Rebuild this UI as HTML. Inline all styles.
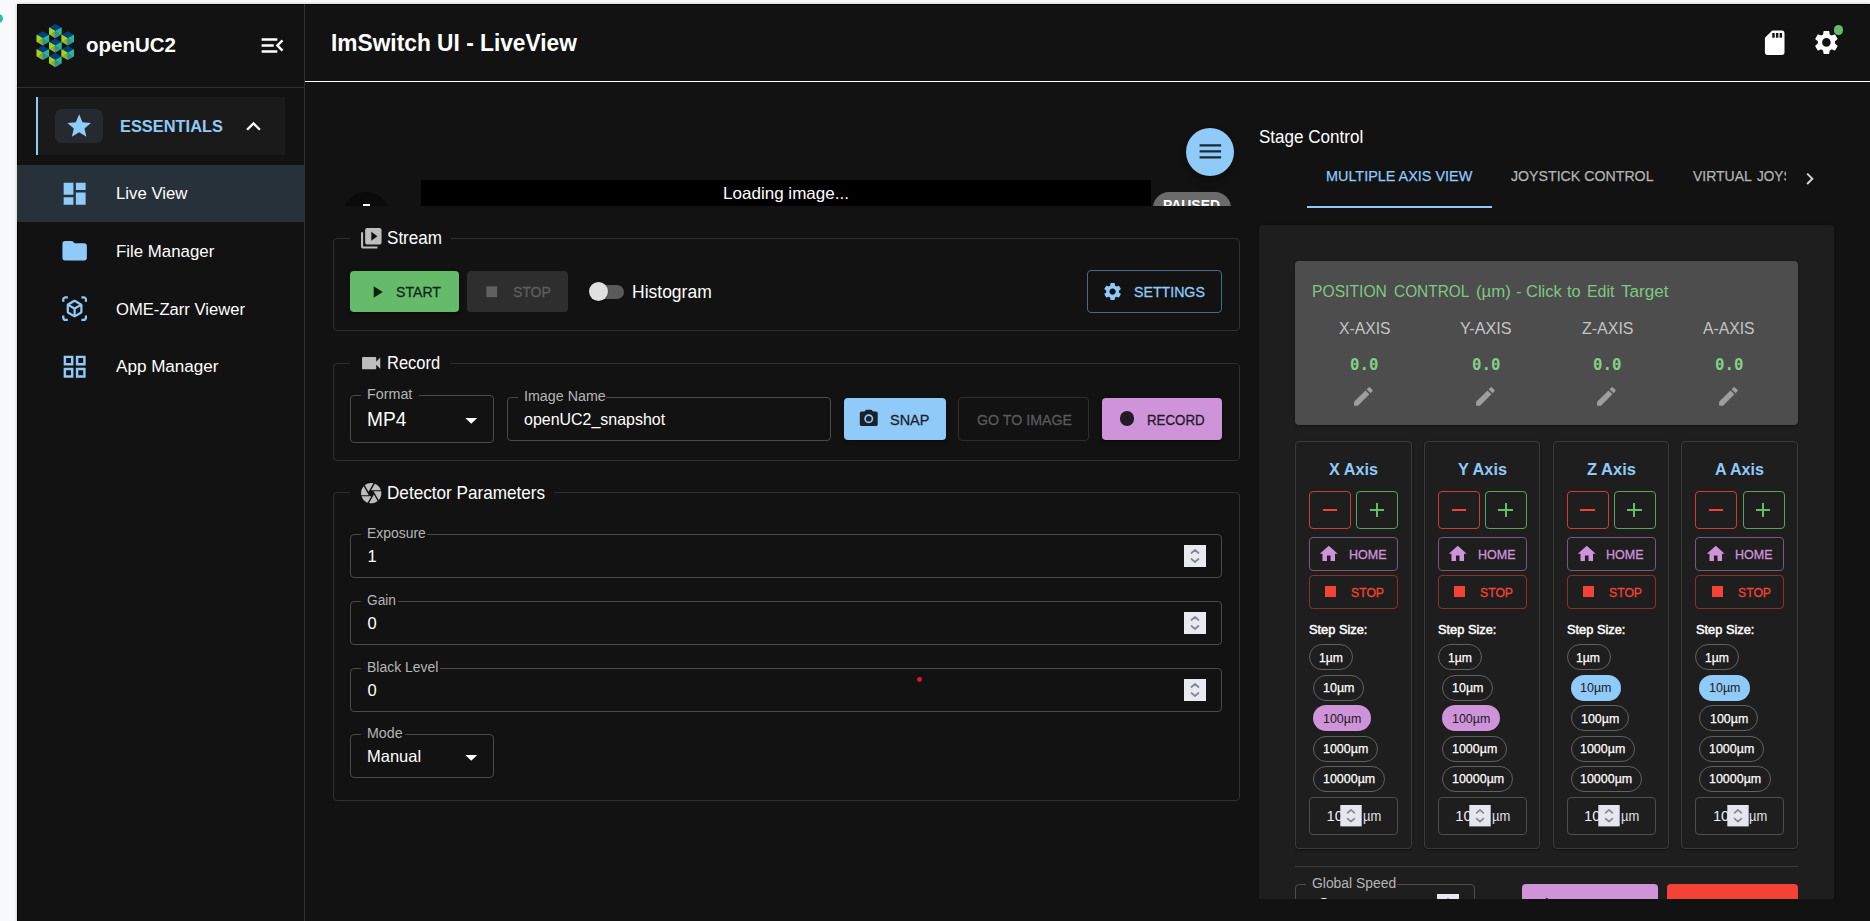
<!DOCTYPE html>
<html lang="en">
<head>
<meta charset="utf-8">
<title>ImSwitch UI - LiveView</title>
<style>
html,body{margin:0;padding:0}
body{width:1870px;height:921px;overflow:hidden;position:relative;background:#f8f9fa;font-family:"Liberation Sans",sans-serif;}
div,svg.ic,.t{position:absolute;box-sizing:border-box}
.t{white-space:nowrap;transform-origin:0 0;line-height:1;margin:0;padding:0;font-weight:400}
.g{position:absolute;left:0;top:0;width:0;height:0;display:block}
.clip{overflow:hidden}

</style>
</head>
<body>
<div style="left:-5.8px;top:13.5px;width:9.1px;height:9.1px;border-radius:50%;background:#2bc1a0"></div>
<div style="left:17px;top:4px;width:1853px;height:917px;background:#121212;border-top:1px solid #000;border-left:1px solid #000;box-shadow:0 0 3px rgba(0,0,0,.25)"></div>
<aside class="g">
<div style="left:304px;top:4px;width:1px;height:917px;background:#2f2f2f"></div>
<div style="left:17px;top:87px;width:287px;height:1px;background:#2f2f2f"></div>
<svg class="ic" style="left:34px;top:20px;width:44px;height:50px" viewBox="34 20 44 50"><polygon points="55.30,23.90 61.49,27.48 55.30,31.05 49.11,27.48" fill="#01407f"/><polygon points="49.11,27.48 55.30,31.05 55.30,38.20 49.11,34.62" fill="#8fb82a"/><polygon points="49.11,27.48 55.30,31.05 49.11,34.62" fill="#a6d80e"/><polygon points="55.30,31.05 55.30,38.20 52.20,32.84" fill="#80a04a"/><polygon points="61.49,27.48 61.49,34.62 55.30,38.20 55.30,31.05" fill="#2a9d92"/><polygon points="61.49,27.48 61.49,34.62 55.30,31.05" fill="#27b896"/><polygon points="55.30,31.05 55.30,38.20 58.40,32.84" fill="#3a8a8c"/><polygon points="55.30,38.40 61.49,41.97 55.30,45.55 49.11,41.97" fill="#01407f"/><polygon points="49.11,41.97 55.30,45.55 55.30,52.70 49.11,49.12" fill="#8fb82a"/><polygon points="49.11,41.97 55.30,45.55 49.11,49.12" fill="#a6d80e"/><polygon points="55.30,45.55 55.30,52.70 52.20,47.34" fill="#80a04a"/><polygon points="61.49,41.97 61.49,49.12 55.30,52.70 55.30,45.55" fill="#2a9d92"/><polygon points="61.49,41.97 61.49,49.12 55.30,45.55" fill="#27b896"/><polygon points="55.30,45.55 55.30,52.70 58.40,47.34" fill="#3a8a8c"/><polygon points="55.30,52.85 61.49,56.42 55.30,60.00 49.11,56.42" fill="#01407f"/><polygon points="49.11,56.42 55.30,60.00 55.30,67.15 49.11,63.58" fill="#8fb82a"/><polygon points="49.11,56.42 55.30,60.00 49.11,63.58" fill="#a6d80e"/><polygon points="55.30,60.00 55.30,67.15 52.20,61.79" fill="#80a04a"/><polygon points="61.49,56.42 61.49,63.58 55.30,67.15 55.30,60.00" fill="#2a9d92"/><polygon points="61.49,56.42 61.49,63.58 55.30,60.00" fill="#27b896"/><polygon points="55.30,60.00 55.30,67.15 58.40,61.79" fill="#3a8a8c"/><polygon points="42.85,31.15 49.04,34.72 42.85,38.30 36.66,34.72" fill="#01407f"/><polygon points="36.66,34.72 42.85,38.30 42.85,45.45 36.66,41.88" fill="#8fb82a"/><polygon points="36.66,34.72 42.85,38.30 36.66,41.88" fill="#a6d80e"/><polygon points="42.85,38.30 42.85,45.45 39.75,40.09" fill="#80a04a"/><polygon points="49.04,34.72 49.04,41.88 42.85,45.45 42.85,38.30" fill="#2a9d92"/><polygon points="49.04,34.72 49.04,41.88 42.85,38.30" fill="#27b896"/><polygon points="42.85,38.30 42.85,45.45 45.95,40.09" fill="#3a8a8c"/><polygon points="42.85,45.65 49.04,49.22 42.85,52.80 36.66,49.22" fill="#01407f"/><polygon points="36.66,49.22 42.85,52.80 42.85,59.95 36.66,56.38" fill="#8fb82a"/><polygon points="36.66,49.22 42.85,52.80 36.66,56.38" fill="#a6d80e"/><polygon points="42.85,52.80 42.85,59.95 39.75,54.59" fill="#80a04a"/><polygon points="49.04,49.22 49.04,56.38 42.85,59.95 42.85,52.80" fill="#2a9d92"/><polygon points="49.04,49.22 49.04,56.38 42.85,52.80" fill="#27b896"/><polygon points="42.85,52.80 42.85,59.95 45.95,54.59" fill="#3a8a8c"/><polygon points="67.75,31.15 73.94,34.72 67.75,38.30 61.56,34.72" fill="#01407f"/><polygon points="61.56,34.72 67.75,38.30 67.75,45.45 61.56,41.88" fill="#8fb82a"/><polygon points="61.56,34.72 67.75,38.30 61.56,41.88" fill="#a6d80e"/><polygon points="67.75,38.30 67.75,45.45 64.65,40.09" fill="#80a04a"/><polygon points="73.94,34.72 73.94,41.88 67.75,45.45 67.75,38.30" fill="#2a9d92"/><polygon points="73.94,34.72 73.94,41.88 67.75,38.30" fill="#27b896"/><polygon points="67.75,38.30 67.75,45.45 70.85,40.09" fill="#3a8a8c"/><polygon points="67.75,45.65 73.94,49.22 67.75,52.80 61.56,49.22" fill="#01407f"/><polygon points="61.56,49.22 67.75,52.80 67.75,59.95 61.56,56.38" fill="#8fb82a"/><polygon points="61.56,49.22 67.75,52.80 61.56,56.38" fill="#a6d80e"/><polygon points="67.75,52.80 67.75,59.95 64.65,54.59" fill="#80a04a"/><polygon points="73.94,49.22 73.94,56.38 67.75,59.95 67.75,52.80" fill="#2a9d92"/><polygon points="73.94,49.22 73.94,56.38 67.75,52.80" fill="#27b896"/><polygon points="67.75,52.80 67.75,59.95 70.85,54.59" fill="#3a8a8c"/></svg>
<span class="t" style="left:86.00px;top:36.00px;font-size:19.8px;color:#fff;font-weight:700;transform:scaleX(1.0357);">openUC2</span>
<svg class="ic" style="left:257.70px;top:30.50px;width:29px;height:29px" viewBox="0 0 24 24" fill="#fff"><path d="M3 18h13v-2H3zm0-5h10v-2H3zm0-7v2h13V6zm18 9.59L17.42 12 21 8.41 19.59 7l-5 5 5 5z"/></svg>
<div style="left:36px;top:97px;width:249px;height:58px;background:#1a1a1a;border-left:2px solid #90caf9"></div>
<div style="left:55px;top:109px;width:48px;height:34px;background:#242a2f;border-radius:7px"></div>
<svg class="ic" style="left:65.15px;top:112.45px;width:28.3px;height:28.3px" viewBox="0 0 24 24" fill="#90caf9"><path d="M12 17.27 18.18 21l-1.64-7.03L22 9.24l-7.19-.61L12 2 9.19 8.63 2 9.24l5.46 4.73L5.82 21z"/></svg>
<span class="t" style="left:119.50px;top:118.00px;font-size:17.4px;color:#90caf9;font-weight:700;transform:scaleX(0.9428);">ESSENTIALS</span>
<svg class="ic" style="left:239.00px;top:112.10px;width:29px;height:29px" viewBox="0 0 24 24" fill="#fff"><path d="m12 8-6 6 1.41 1.41L12 10.83l4.59 4.58L18 14z"/></svg>
<div style="left:17px;top:165px;width:287px;height:57px;background:#27313a"></div>
<svg class="ic" style="left:59.75px;top:178.55px;width:29.3px;height:29.3px" viewBox="0 0 24 24" fill="#90caf9"><path d="M3 13h8V3H3zm0 8h8v-6H3zm10 0h8V11h-8zm0-18v6h8V3z"/></svg>
<span class="t" style="left:115.50px;top:185.00px;font-size:17.2px;color:#fff;transform:scaleX(0.9744);">Live View</span>
<svg class="ic" style="left:59.85px;top:236.45px;width:29.3px;height:29.3px" viewBox="0 0 24 24" fill="#90caf9"><path d="M10 4H4c-1.1 0-1.99.9-1.99 2L2 18c0 1.1.9 2 2 2h16c1.1 0 2-.9 2-2V8c0-1.1-.9-2-2-2h-8z"/></svg>
<span class="t" style="left:115.50px;top:243.00px;font-size:17.2px;color:#fff;transform:scaleX(0.9796);">File Manager</span>
<svg class="ic" style="left:60.90px;top:295.00px;width:27.2px;height:27.2px" viewBox="0 0 24 24" fill="#90caf9"><path d="M3 4c0-.55.45-1 1-1h2V1H4C2.34 1 1 2.34 1 4v2h2V4zm0 16v-2H1v2c0 1.66 1.34 3 3 3h2v-2H4c-.55 0-1-.45-1-1zM20 1h-2v2h2c.55 0 1 .45 1 1v2h2V4c0-1.66-1.34-3-3-3zm1 19c0 .55-.45 1-1 1h-2v2h2c1.66 0 3-1.34 3-3v-2h-2v2zm-2-5.13V9.13c0-.72-.38-1.38-1-1.73l-5-2.88c-.31-.18-.65-.27-1-.27s-.69.09-1 .27L6 7.39c-.62.36-1 1.02-1 1.74v5.74c0 .72.38 1.38 1 1.73l5 2.88c.31.18.65.27 1 .27s.69-.09 1-.27l5-2.88c.62-.35 1-1.01 1-1.73zm-8 2.3l-4-2.3v-4.63l4 2.33v4.6zm1-6.33L8.04 8.53 12 6.25l3.96 2.28L12 10.84zm5 4.03l-4 2.3v-4.6l4-2.33v4.63z"/></svg>
<span class="t" style="left:116.00px;top:301.00px;font-size:17.2px;color:#fff;transform:scaleX(0.9667);">OME-Zarr Viewer</span>
<svg class="ic" style="left:59.55px;top:351.55px;width:29.3px;height:29.3px" viewBox="0 0 24 24" fill="#90caf9"><path d="M3 3v8h8V3zm6 6H5V5h4zm-6 4v8h8v-8zm6 6H5v-4h4zm4-16v8h8V3zm6 6h-4V5h4zm-6 4v8h8v-8zm6 6h-4v-4h4z"/></svg>
<span class="t" style="left:115.60px;top:358.00px;font-size:17.2px;color:#fff;transform:scaleX(0.9938);">App Manager</span>
</aside>
<header class="g">
<div style="left:305px;top:81px;width:1565px;height:1px;background:#fff"></div>
<span class="t" style="left:330.70px;top:31.00px;font-size:24.5px;color:#fff;font-weight:700;transform:scaleX(0.9277);">ImSwitch UI - LiveView</span>
<svg class="ic" style="left:1759.80px;top:27.70px;width:29.4px;height:29.4px" viewBox="0 0 24 24" fill="#fff"><path d="M18 2h-8L4.02 8 4 20c0 1.1.9 2 2 2h12c1.1 0 2-.9 2-2V4c0-1.1-.9-2-2-2m-6 6h-2V4h2zm3 0h-2V4h2zm3 0h-2V4h2z"/></svg>
<svg class="ic" style="left:1811.90px;top:28.10px;width:28.8px;height:28.8px" viewBox="0 0 24 24" fill="#fff"><path d="M19.14 12.94c.04-.3.06-.61.06-.94 0-.32-.02-.64-.07-.94l2.03-1.58c.18-.14.23-.41.12-.61l-1.92-3.32c-.12-.22-.37-.29-.59-.22l-2.39.96c-.5-.38-1.03-.7-1.62-.94l-.36-2.54c-.04-.24-.24-.41-.48-.41h-3.84c-.24 0-.43.17-.47.41l-.36 2.54c-.59.24-1.13.57-1.62.94l-2.39-.96c-.22-.08-.47 0-.59.22L2.74 8.87c-.12.21-.08.47.12.61l2.03 1.58c-.05.3-.09.63-.09.94s.02.64.07.94l-2.03 1.58c-.18.14-.23.41-.12.61l1.92 3.32c.12.22.37.29.59.22l2.39-.96c.5.38 1.03.7 1.62.94l.36 2.54c.05.24.24.41.48.41h3.84c.24 0 .44-.17.47-.41l.36-2.54c.59-.24 1.13-.56 1.62-.94l2.39.96c.22.08.47 0 .59-.22l1.92-3.32c.12-.22.07-.47-.12-.61zM12 15.6c-1.98 0-3.6-1.62-3.6-3.6s1.62-3.6 3.6-3.6 3.6 1.62 3.6 3.6-1.62 3.6-3.6 3.6"/></svg>
<div style="left:1833.9px;top:25.2px;width:9.4px;height:9.4px;border-radius:50%;background:#66bb6a"></div>
</header>
<main class="g">
<section class="g">
<div class="clip" style="left:0;top:0;width:1870px;height:206px">
<div style="left:421px;top:180px;width:730px;height:40px;background:#000"></div>
<span class="t" style="left:722.60px;top:185.00px;font-size:16.5px;color:#fff;transform:scaleX(1.0326);">Loading image...</span>
<div style="left:342px;top:191.7px;width:48px;height:48px;border-radius:50%;background:#0a0a0a"></div>
<div style="left:362.7px;top:203.9px;width:7.3px;height:2.2px;background:#fff"></div>
<div style="left:1152.8px;top:191.7px;width:78.4px;height:32px;border-radius:16px;background:#6b6b6b"></div>
<span class="t" style="left:1163.10px;top:198.00px;font-size:14.5px;color:#fff;font-weight:700;transform:scaleX(0.9599);">PAUSED</span>
</div>
<div style="left:1185.8px;top:127.8px;width:48.4px;height:48.4px;border-radius:50%;background:#90caf9;box-shadow:0 3px 5px -1px rgba(0,0,0,.2),0 6px 10px rgba(0,0,0,.14)"></div>
<svg class="ic" style="left:1196.05px;top:137.15px;width:28.7px;height:28.7px" viewBox="0 0 24 24" fill="#1b2833"><path d="M3 18h18v-2H3zm0-5h18v-2H3zm0-7v2h18V6z"/></svg>
<div style="left:333px;top:238px;width:907px;height:93px;border:1px solid #2f2f2f;border-radius:4px"></div>
<div style="left:350px;top:238px;width:101px;height:1px;background:#121212"></div>
<svg class="ic" style="left:358.70px;top:225.70px;width:24.6px;height:24.6px" viewBox="0 0 24 24" fill="#bdbdbd"><path d="M4 6H2v14c0 1.1.9 2 2 2h14v-2H4zm16-4H8c-1.1 0-2 .9-2 2v12c0 1.1.9 2 2 2h12c1.1 0 2-.9 2-2V4c0-1.1-.9-2-2-2m-8 12.5v-9l6 4.5z"/></svg>
<span class="t" style="left:387.30px;top:230.00px;font-size:17.9px;color:#fff;transform:scaleX(0.9535);">Stream</span>
<div style="left:350px;top:271px;width:109px;height:41px;background:#66bb6a;border-radius:4px;box-shadow:0 3px 1px -2px rgba(0,0,0,.2),0 2px 2px rgba(0,0,0,.14),0 1px 5px rgba(0,0,0,.12)"></div>
<svg class="ic" style="left:367.20px;top:281.80px;width:20px;height:20px" viewBox="0 0 24 24" fill="#10200f"><path d="M8 5v14l11-7z"/></svg>
<span class="t" style="left:396.30px;top:284.00px;font-size:15.5px;color:#14241a;transform:scaleX(0.9107);-webkit-text-stroke:0.3px #14241a;">START</span>
<div style="left:467px;top:271px;width:101px;height:41px;background:#2e2e2e;border-radius:4px"></div>
<svg class="ic" style="left:480.75px;top:280.95px;width:21.5px;height:21.5px" viewBox="0 0 24 24" fill="#616161"><path d="M6 6h12v12H6z"/></svg>
<span class="t" style="left:512.50px;top:284.00px;font-size:15.5px;color:#5f5f5f;transform:scaleX(0.9025);-webkit-text-stroke:0.3px #5f5f5f;">STOP</span>
<div style="left:590px;top:284.5px;width:34px;height:14px;border-radius:7px;background:#5a5a5a"></div>
<div style="left:588.8px;top:281.8px;width:19.4px;height:19.4px;border-radius:50%;background:#e0e0e0;box-shadow:0 2px 1px -1px rgba(0,0,0,.2),0 1px 1px rgba(0,0,0,.14),0 1px 3px rgba(0,0,0,.12)"></div>
<span class="t" style="left:632.20px;top:283.00px;font-size:18.2px;color:#fff;transform:scaleX(0.9618);">Histogram</span>
<div style="left:1087px;top:270px;width:135px;height:43px;border:1px solid #4b6a82;border-radius:4px"></div>
<svg class="ic" style="left:1102.00px;top:281.20px;width:21.2px;height:21.2px" viewBox="0 0 24 24" fill="#90caf9"><path d="M19.14 12.94c.04-.3.06-.61.06-.94 0-.32-.02-.64-.07-.94l2.03-1.58c.18-.14.23-.41.12-.61l-1.92-3.32c-.12-.22-.37-.29-.59-.22l-2.39.96c-.5-.38-1.03-.7-1.62-.94l-.36-2.54c-.04-.24-.24-.41-.48-.41h-3.84c-.24 0-.43.17-.47.41l-.36 2.54c-.59.24-1.13.57-1.62.94l-2.39-.96c-.22-.08-.47 0-.59.22L2.74 8.87c-.12.21-.08.47.12.61l2.03 1.58c-.05.3-.09.63-.09.94s.02.64.07.94l-2.03 1.58c-.18.14-.23.41-.12.61l1.92 3.32c.12.22.37.29.59.22l2.39-.96c.5.38 1.03.7 1.62.94l.36 2.54c.05.24.24.41.48.41h3.84c.24 0 .44-.17.47-.41l.36-2.54c.59-.24 1.13-.56 1.62-.94l2.39.96c.22.08.47 0 .59-.22l1.92-3.32c.12-.22.07-.47-.12-.61zM12 15.6c-1.98 0-3.6-1.62-3.6-3.6s1.62-3.6 3.6-3.6 3.6 1.62 3.6 3.6-1.62 3.6-3.6 3.6"/></svg>
<span class="t" style="left:1133.60px;top:284.00px;font-size:15.5px;color:#90caf9;transform:scaleX(0.9139);-webkit-text-stroke:0.3px #90caf9;">SETTINGS</span>
<div style="left:333px;top:363px;width:907px;height:98px;border:1px solid #2f2f2f;border-radius:4px"></div>
<div style="left:350px;top:363px;width:100px;height:1px;background:#121212"></div>
<svg class="ic" style="left:358.75px;top:350.75px;width:24.3px;height:24.3px" viewBox="0 0 24 24" fill="#bdbdbd"><path d="M17 10.5V7c0-.55-.45-1-1-1H4c-.55 0-1 .45-1 1v10c0 .55.45 1 1 1h12c.55 0 1-.45 1-1v-3.5l4 4v-11z"/></svg>
<span class="t" style="left:386.50px;top:355.00px;font-size:17.9px;color:#fff;transform:scaleX(0.9195);">Record</span>
<div style="left:350px;top:395px;width:144px;height:48px;border:1px solid #4a4a4a;border-radius:4px"></div>
<div style="left:361px;top:395px;width:58px;height:1px;background:#121212"></div>
<span class="t" style="left:366.90px;top:387.00px;font-size:14.7px;color:#b5b5b5;transform:scaleX(0.9749);">Format</span>
<span class="t" style="left:367.00px;top:410.00px;font-size:19.8px;color:#fff;transform:scaleX(0.9656);">MP4</span>
<svg class="ic" style="left:456.95px;top:405.75px;width:28.5px;height:28.5px" viewBox="0 0 24 24" fill="#fff"><path d="m7 10 5 5 5-5z"/></svg>
<div style="left:507px;top:397px;width:324px;height:44px;border:1px solid #4a4a4a;border-radius:4px"></div>
<div style="left:518px;top:397px;width:88px;height:1px;background:#121212"></div>
<span class="t" style="left:523.70px;top:389.00px;font-size:14.7px;color:#b5b5b5;transform:scaleX(0.9718);">Image Name</span>
<span class="t" style="left:524.20px;top:411.00px;font-size:16.5px;color:#fff;transform:scaleX(0.9680);">openUC2_snapshot</span>
<div style="left:844px;top:398px;width:102px;height:42px;background:#90caf9;border-radius:4px;box-shadow:0 3px 1px -2px rgba(0,0,0,.2),0 2px 2px rgba(0,0,0,.14),0 1px 5px rgba(0,0,0,.12)"></div>
<svg class="ic" style="left:858.05px;top:407.85px;width:21.5px;height:21.5px" viewBox="0 0 24 24" fill="#17222c"><circle cx="12" cy="12" r="3.2"/><path d="M9 2 7.17 4H4c-1.1 0-2 .9-2 2v12c0 1.1.9 2 2 2h16c1.1 0 2-.9 2-2V6c0-1.1-.9-2-2-2h-3.17L15 2zm3 15c-2.76 0-5-2.24-5-5s2.24-5 5-5 5 2.24 5 5-2.24 5-5 5z"/></svg>
<span class="t" style="left:889.50px;top:412.00px;font-size:15.5px;color:#17222c;transform:scaleX(0.9319);-webkit-text-stroke:0.3px #17222c;">SNAP</span>
<div style="left:958px;top:397px;width:131px;height:44px;border:1px solid #2e2e2e;border-radius:4px"></div>
<span class="t" style="left:976.50px;top:412.00px;font-size:15.5px;color:#5a5a5a;transform:scaleX(0.9170);-webkit-text-stroke:0.3px #5a5a5a;">GO TO IMAGE</span>
<div style="left:1102px;top:398px;width:120px;height:42px;background:#ce93d8;border-radius:4px;box-shadow:0 3px 1px -2px rgba(0,0,0,.2),0 2px 2px rgba(0,0,0,.14),0 1px 5px rgba(0,0,0,.12)"></div>
<div style="left:1119.6px;top:411.2px;width:14.8px;height:14.8px;border-radius:50%;background:#231927"></div>
<span class="t" style="left:1146.90px;top:412.00px;font-size:15.5px;color:#231927;transform:scaleX(0.8574);-webkit-text-stroke:0.3px #231927;">RECORD</span>
<div style="left:333px;top:492px;width:907px;height:309px;border:1px solid #2f2f2f;border-radius:4px"></div>
<div style="left:350px;top:492px;width:204px;height:1px;background:#121212"></div>
<svg class="ic" style="left:358.70px;top:480.70px;width:24.4px;height:24.4px" viewBox="0 0 24 24" fill="#bdbdbd"><path d="M9.4 10.5l4.77-8.26C13.47 2.09 12.75 2 12 2c-2.4 0-4.6.85-6.32 2.25l3.66 6.35.06-.1zM21.54 9c-.92-2.92-3.15-5.26-6-6.34L11.88 9h9.66zm.26 1h-7.49l.29.5 4.76 8.25C21 16.97 22 14.61 22 12c0-.69-.07-1.35-.2-2zM8.54 12l-3.9-6.75C3.01 7.03 2 9.39 2 12c0 .69.07 1.35.2 2h7.49l-1.15-2zm-6.08 3c.92 2.92 3.15 5.26 6 6.34L12.12 15H2.46zm11.27 0l-3.9 6.76c.7.15 1.42.24 2.17.24 2.4 0 4.6-.85 6.32-2.25l-3.66-6.35-.93 1.6z"/></svg>
<span class="t" style="left:386.80px;top:485.00px;font-size:17.9px;color:#fff;transform:scaleX(0.9577);">Detector Parameters</span>
<div style="left:350px;top:534px;width:872px;height:44px;border:1px solid #4a4a4a;border-radius:4px"></div>
<div style="left:361px;top:534px;width:66px;height:1px;background:#121212"></div>
<span class="t" style="left:366.70px;top:526.00px;font-size:14.7px;color:#b5b5b5;transform:scaleX(0.9481);">Exposure</span>
<span class="t" style="left:367.50px;top:548.00px;font-size:16.5px;color:#fff;">1</span>
<svg class="ic" style="left:1184px;top:545px;width:22px;height:22px" viewBox="0 0 22 22"><rect width="22" height="22" fill="#e9e9f0"/><path d="M7.5 8 11 5l3.5 3M7.5 14l3.5 3 3.5-3" fill="none" stroke="#85859a" stroke-width="1.7" stroke-linecap="round" stroke-linejoin="round"/></svg>
<div style="left:350px;top:601px;width:872px;height:44px;border:1px solid #4a4a4a;border-radius:4px"></div>
<div style="left:361px;top:601px;width:37px;height:1px;background:#121212"></div>
<span class="t" style="left:367.20px;top:593.00px;font-size:14.7px;color:#b5b5b5;transform:scaleX(0.9332);">Gain</span>
<span class="t" style="left:367.50px;top:615.00px;font-size:16.5px;color:#fff;">0</span>
<svg class="ic" style="left:1184px;top:612px;width:22px;height:22px" viewBox="0 0 22 22"><rect width="22" height="22" fill="#e9e9f0"/><path d="M7.5 8 11 5l3.5 3M7.5 14l3.5 3 3.5-3" fill="none" stroke="#85859a" stroke-width="1.7" stroke-linecap="round" stroke-linejoin="round"/></svg>
<div style="left:350px;top:668px;width:872px;height:44px;border:1px solid #4a4a4a;border-radius:4px"></div>
<div style="left:361px;top:668px;width:79px;height:1px;background:#121212"></div>
<span class="t" style="left:366.70px;top:660.00px;font-size:14.7px;color:#b5b5b5;transform:scaleX(0.9507);">Black Level</span>
<span class="t" style="left:367.50px;top:682.00px;font-size:16.5px;color:#fff;">0</span>
<svg class="ic" style="left:1184px;top:679px;width:22px;height:22px" viewBox="0 0 22 22"><rect width="22" height="22" fill="#e9e9f0"/><path d="M7.5 8 11 5l3.5 3M7.5 14l3.5 3 3.5-3" fill="none" stroke="#85859a" stroke-width="1.7" stroke-linecap="round" stroke-linejoin="round"/></svg>
<div style="left:350px;top:734.4px;width:144px;height:43.6px;border:1px solid #4a4a4a;border-radius:4px"></div>
<div style="left:361px;top:734.4px;width:44.39999999999998px;height:1px;background:#121212"></div>
<span class="t" style="left:366.90px;top:726.00px;font-size:14.7px;color:#b5b5b5;transform:scaleX(0.9675);">Mode</span>
<span class="t" style="left:367.00px;top:748.00px;font-size:16.5px;color:#fff;">Manual</span>
<svg class="ic" style="left:457.15px;top:742.75px;width:28.5px;height:28.5px" viewBox="0 0 24 24" fill="#fff"><path d="m7 10 5 5 5-5z"/></svg>
<div style="left:917.3px;top:677.4px;width:4.8px;height:4.8px;border-radius:50%;background:#e5141f"></div>
</section>
<section class="g">
<span class="t" style="left:1259.40px;top:129.00px;font-size:17.7px;color:#fff;transform:scaleX(0.9631);">Stage Control</span>
<div class="clip" style="left:0;top:0;width:1870px;height:899px">
<span class="t" style="left:1326.10px;top:168.00px;font-size:15.5px;color:#90caf9;transform:scaleX(0.9294);-webkit-text-stroke:0.25px #90caf9;">MULTIPLE AXIS VIEW</span>
<span class="t" style="left:1511.30px;top:168.00px;font-size:15.5px;color:#b4b4b4;transform:scaleX(0.9143);-webkit-text-stroke:0.25px #b4b4b4;">JOYSTICK CONTROL</span>
<div class="clip" style="left:1680px;top:160px;width:106px;height:40px">
<span class="t" style="left:12.60px;top:8.00px;font-size:15.5px;color:#b4b4b4;transform:scaleX(0.9024);-webkit-text-stroke:0.25px #b4b4b4;">VIRTUAL</span>
<span class="t" style="left:76.70px;top:8.00px;font-size:15.5px;color:#b4b4b4;transform:scaleX(0.8765);-webkit-text-stroke:0.25px #b4b4b4;">JOYSTICK</span>
</div>
<svg class="ic" style="left:1798.40px;top:166.90px;width:23.6px;height:23.6px" viewBox="0 0 24 24" fill="#d4d4d4"><path d="M10 6 8.59 7.41 13.17 12l-4.58 4.59L10 18l6-6z"/></svg>
<div style="left:1307px;top:206px;width:185px;height:2px;background:#90caf9"></div>
<div style="left:1259px;top:225px;width:575px;height:700px;background:#1e1e1e;border-radius:4px;box-shadow:0 2px 1px -1px rgba(0,0,0,.2),0 1px 1px rgba(0,0,0,.14),0 1px 3px rgba(0,0,0,.12)"></div>
<div style="left:1295px;top:261px;width:503px;height:164px;background:#4d4d4d;border-radius:4px;box-shadow:0 2px 1px -1px rgba(0,0,0,.2),0 1px 1px rgba(0,0,0,.14),0 1px 3px rgba(0,0,0,.12)"></div>
<span class="t" style="left:1312.30px;top:284.00px;font-size:16.8px;color:#7fc883;transform:scaleX(0.9347);">POSITION</span>
<span class="t" style="left:1393.90px;top:284.00px;font-size:16.8px;color:#7fc883;transform:scaleX(0.9184);">CONTROL</span>
<span class="t" style="left:1476.00px;top:284.00px;font-size:16.8px;color:#7fc883;">(µm)</span>
<span class="t" style="left:1516.00px;top:284.00px;font-size:16.8px;color:#7fc883;">-</span>
<span class="t" style="left:1525.60px;top:284.00px;font-size:16.8px;color:#7fc883;transform:scaleX(0.9836);">Click</span>
<span class="t" style="left:1566.80px;top:284.00px;font-size:16.8px;color:#7fc883;transform:scaleX(0.9737);">to</span>
<span class="t" style="left:1586.60px;top:284.00px;font-size:16.8px;color:#7fc883;transform:scaleX(0.9488);">Edit</span>
<span class="t" style="left:1620.70px;top:284.00px;font-size:16.8px;color:#7fc883;transform:scaleX(1.0208);">Target</span>
<span class="t" style="left:1338.85px;top:320.00px;font-size:17.3px;color:#c4c4c4;transform:scaleX(0.9085);">X-AXIS</span>
<span class="t" style="left:1350.45px;top:357.00px;font-size:16px;color:#81d184;font-weight:700;font-family:'DejaVu Sans Mono', 'Liberation Mono', monospace;transform:scaleX(0.9804);">0.0</span>
<svg class="ic" style="left:1351.30px;top:383.80px;width:24.8px;height:24.8px" viewBox="0 0 24 24" fill="#9e9e9e"><path d="M3 17.25V21h3.75L17.81 9.94l-3.75-3.75zM20.71 7.04c.39-.39.39-1.02 0-1.41l-2.34-2.34a.9959.9959 0 0 0-1.41 0l-1.83 1.83 3.75 3.75z"/></svg>
<span class="t" style="left:1460.30px;top:320.00px;font-size:17.3px;color:#c4c4c4;transform:scaleX(0.9347);">Y-AXIS</span>
<span class="t" style="left:1471.90px;top:357.00px;font-size:16px;color:#81d184;font-weight:700;font-family:'DejaVu Sans Mono', 'Liberation Mono', monospace;transform:scaleX(0.9804);">0.0</span>
<svg class="ic" style="left:1472.75px;top:383.80px;width:24.8px;height:24.8px" viewBox="0 0 24 24" fill="#9e9e9e"><path d="M3 17.25V21h3.75L17.81 9.94l-3.75-3.75zM20.71 7.04c.39-.39.39-1.02 0-1.41l-2.34-2.34a.9959.9959 0 0 0-1.41 0l-1.83 1.83 3.75 3.75z"/></svg>
<span class="t" style="left:1581.75px;top:320.00px;font-size:17.3px;color:#c4c4c4;transform:scaleX(0.9244);">Z-AXIS</span>
<span class="t" style="left:1593.35px;top:357.00px;font-size:16px;color:#81d184;font-weight:700;font-family:'DejaVu Sans Mono', 'Liberation Mono', monospace;transform:scaleX(0.9804);">0.0</span>
<svg class="ic" style="left:1594.20px;top:383.80px;width:24.8px;height:24.8px" viewBox="0 0 24 24" fill="#9e9e9e"><path d="M3 17.25V21h3.75L17.81 9.94l-3.75-3.75zM20.71 7.04c.39-.39.39-1.02 0-1.41l-2.34-2.34a.9959.9959 0 0 0-1.41 0l-1.83 1.83 3.75 3.75z"/></svg>
<span class="t" style="left:1703.20px;top:320.00px;font-size:17.3px;color:#c4c4c4;transform:scaleX(0.9085);">A-AXIS</span>
<span class="t" style="left:1714.80px;top:357.00px;font-size:16px;color:#81d184;font-weight:700;font-family:'DejaVu Sans Mono', 'Liberation Mono', monospace;transform:scaleX(0.9804);">0.0</span>
<svg class="ic" style="left:1715.65px;top:383.80px;width:24.8px;height:24.8px" viewBox="0 0 24 24" fill="#9e9e9e"><path d="M3 17.25V21h3.75L17.81 9.94l-3.75-3.75zM20.71 7.04c.39-.39.39-1.02 0-1.41l-2.34-2.34a.9959.9959 0 0 0-1.41 0l-1.83 1.83 3.75 3.75z"/></svg>
<div style="left:1295.0px;top:441px;width:116.6px;height:408px;border:1px solid #3a3a3a;border-radius:4px;box-shadow:0 2px 1px -1px rgba(0,0,0,.2),0 1px 1px rgba(0,0,0,.14),0 1px 3px rgba(0,0,0,.12)"></div>
<span class="t" style="left:1328.90px;top:462.00px;font-size:16.8px;color:#90caf9;font-weight:700;transform:scaleX(0.9666);">X Axis</span>
<div style="left:1309.0px;top:491px;width:42px;height:38px;border:1px solid #d03c32;border-radius:4px"></div>
<div style="left:1322.7px;top:508.8px;width:14.4px;height:2px;background:#f44336"></div>
<div style="left:1356.2px;top:491px;width:42px;height:38px;border:1px solid #5aa35e;border-radius:4px"></div>
<div style="left:1369.6px;top:508.9px;width:14.4px;height:2px;background:#66bb6a"></div>
<div style="left:1375.8px;top:502.7px;width:2px;height:14.4px;background:#66bb6a"></div>
<div style="left:1309.0px;top:537px;width:89px;height:34px;border:1px solid #78587e;border-radius:4px"></div>
<svg class="ic" style="left:1318.15px;top:543.05px;width:21.5px;height:21.5px" viewBox="0 0 24 24" fill="#ce93d8"><path d="M10 20v-6h4v6h5v-8h3L12 3 2 12h3v8z"/></svg>
<span class="t" style="left:1348.80px;top:548.00px;font-size:13.4px;color:#ce93d8;transform:scaleX(0.9337);-webkit-text-stroke:0.3px #ce93d8;">HOME</span>
<div style="left:1309.0px;top:575.2px;width:89px;height:34px;border:1px solid #8a3029;border-radius:4px"></div>
<div style="left:1325.1px;top:586px;width:11px;height:11.2px;background:#f44336"></div>
<span class="t" style="left:1351.40px;top:586.00px;font-size:13.4px;color:#f44336;transform:scaleX(0.9115);-webkit-text-stroke:0.3px #f44336;">STOP</span>
<span class="t" style="left:1309.20px;top:623.00px;font-size:13.6px;color:#fff;transform:scaleX(0.9417);-webkit-text-stroke:0.5px #fff;">Step Size:</span>
<div style="left:1309.0px;top:644px;width:44px;height:26px;border:1px solid #616161;border-radius:13px"></div>
<span class="t" style="left:1318.70px;top:651.00px;font-size:13.2px;color:#fff;transform:scaleX(0.9250);-webkit-text-stroke:0.25px #fff;">1µm</span>
<div style="left:1313.0px;top:674.6px;width:50.8px;height:26px;border:1px solid #616161;border-radius:13px"></div>
<span class="t" style="left:1322.80px;top:681.00px;font-size:13.2px;color:#fff;transform:scaleX(0.9463);-webkit-text-stroke:0.25px #fff;">10µm</span>
<div style="left:1313.0px;top:705.2px;width:58.2px;height:26px;background:#ce93d8;border-radius:13px"></div>
<span class="t" style="left:1323.10px;top:712.00px;font-size:13.2px;color:#1f1a22;transform:scaleX(0.9427);">100µm</span>
<div style="left:1313.0px;top:735.8px;width:64.8px;height:26px;border:1px solid #616161;border-radius:13px"></div>
<span class="t" style="left:1322.80px;top:742.00px;font-size:13.2px;color:#fff;transform:scaleX(0.9444);-webkit-text-stroke:0.25px #fff;">1000µm</span>
<div style="left:1313.0px;top:766.4px;width:71.5px;height:26px;border:1px solid #616161;border-radius:13px"></div>
<span class="t" style="left:1322.80px;top:772.00px;font-size:13.2px;color:#fff;transform:scaleX(0.9456);-webkit-text-stroke:0.25px #fff;">10000µm</span>
<div style="left:1309.0px;top:797.4px;width:89px;height:37.4px;border:1px solid #4d4d4d;border-radius:4px"></div>
<span class="t" style="left:1326.50px;top:809.00px;font-size:14.8px;color:#ececec;">10</span>
<svg class="ic" style="left:1340.3px;top:805.2px;width:22px;height:21.4px" viewBox="0 0 22 22"><rect width="22" height="22" fill="#e6e6ed"/><path d="M7.5 8 11 5l3.5 3M7.5 14l3.5 3 3.5-3" fill="none" stroke="#85859a" stroke-width="1.7" stroke-linecap="round" stroke-linejoin="round"/></svg>
<span class="t" style="left:1363.00px;top:809.00px;font-size:14.8px;color:#e4e4e4;transform:scaleX(0.8738);">µm</span>
<div style="left:1423.8px;top:441px;width:116.6px;height:408px;border:1px solid #3a3a3a;border-radius:4px;box-shadow:0 2px 1px -1px rgba(0,0,0,.2),0 1px 1px rgba(0,0,0,.14),0 1px 3px rgba(0,0,0,.12)"></div>
<span class="t" style="left:1457.70px;top:462.00px;font-size:16.8px;color:#90caf9;font-weight:700;transform:scaleX(0.9724);">Y Axis</span>
<div style="left:1437.8px;top:491px;width:42px;height:38px;border:1px solid #d03c32;border-radius:4px"></div>
<div style="left:1451.5px;top:508.8px;width:14.4px;height:2px;background:#f44336"></div>
<div style="left:1485.0px;top:491px;width:42px;height:38px;border:1px solid #5aa35e;border-radius:4px"></div>
<div style="left:1498.3999999999999px;top:508.9px;width:14.4px;height:2px;background:#66bb6a"></div>
<div style="left:1504.6px;top:502.7px;width:2px;height:14.4px;background:#66bb6a"></div>
<div style="left:1437.8px;top:537px;width:89px;height:34px;border:1px solid #78587e;border-radius:4px"></div>
<svg class="ic" style="left:1446.95px;top:543.05px;width:21.5px;height:21.5px" viewBox="0 0 24 24" fill="#ce93d8"><path d="M10 20v-6h4v6h5v-8h3L12 3 2 12h3v8z"/></svg>
<span class="t" style="left:1477.60px;top:548.00px;font-size:13.4px;color:#ce93d8;transform:scaleX(0.9337);-webkit-text-stroke:0.3px #ce93d8;">HOME</span>
<div style="left:1437.8px;top:575.2px;width:89px;height:34px;border:1px solid #8a3029;border-radius:4px"></div>
<div style="left:1453.8999999999999px;top:586px;width:11px;height:11.2px;background:#f44336"></div>
<span class="t" style="left:1480.20px;top:586.00px;font-size:13.4px;color:#f44336;transform:scaleX(0.9115);-webkit-text-stroke:0.3px #f44336;">STOP</span>
<span class="t" style="left:1438.00px;top:623.00px;font-size:13.6px;color:#fff;transform:scaleX(0.9417);-webkit-text-stroke:0.5px #fff;">Step Size:</span>
<div style="left:1437.8px;top:644px;width:44px;height:26px;border:1px solid #616161;border-radius:13px"></div>
<span class="t" style="left:1447.50px;top:651.00px;font-size:13.2px;color:#fff;transform:scaleX(0.9250);-webkit-text-stroke:0.25px #fff;">1µm</span>
<div style="left:1441.8px;top:674.6px;width:50.8px;height:26px;border:1px solid #616161;border-radius:13px"></div>
<span class="t" style="left:1451.60px;top:681.00px;font-size:13.2px;color:#fff;transform:scaleX(0.9463);-webkit-text-stroke:0.25px #fff;">10µm</span>
<div style="left:1441.8px;top:705.2px;width:58.2px;height:26px;background:#ce93d8;border-radius:13px"></div>
<span class="t" style="left:1451.90px;top:712.00px;font-size:13.2px;color:#1f1a22;transform:scaleX(0.9427);">100µm</span>
<div style="left:1441.8px;top:735.8px;width:64.8px;height:26px;border:1px solid #616161;border-radius:13px"></div>
<span class="t" style="left:1451.60px;top:742.00px;font-size:13.2px;color:#fff;transform:scaleX(0.9444);-webkit-text-stroke:0.25px #fff;">1000µm</span>
<div style="left:1441.8px;top:766.4px;width:71.5px;height:26px;border:1px solid #616161;border-radius:13px"></div>
<span class="t" style="left:1451.60px;top:772.00px;font-size:13.2px;color:#fff;transform:scaleX(0.9456);-webkit-text-stroke:0.25px #fff;">10000µm</span>
<div style="left:1437.8px;top:797.4px;width:89px;height:37.4px;border:1px solid #4d4d4d;border-radius:4px"></div>
<span class="t" style="left:1455.30px;top:809.00px;font-size:14.8px;color:#ececec;">10</span>
<svg class="ic" style="left:1469.1px;top:805.2px;width:22px;height:21.4px" viewBox="0 0 22 22"><rect width="22" height="22" fill="#e6e6ed"/><path d="M7.5 8 11 5l3.5 3M7.5 14l3.5 3 3.5-3" fill="none" stroke="#85859a" stroke-width="1.7" stroke-linecap="round" stroke-linejoin="round"/></svg>
<span class="t" style="left:1491.80px;top:809.00px;font-size:14.8px;color:#e4e4e4;transform:scaleX(0.8738);">µm</span>
<div style="left:1552.6px;top:441px;width:116.6px;height:408px;border:1px solid #3a3a3a;border-radius:4px;box-shadow:0 2px 1px -1px rgba(0,0,0,.2),0 1px 1px rgba(0,0,0,.14),0 1px 3px rgba(0,0,0,.12)"></div>
<span class="t" style="left:1586.50px;top:462.00px;font-size:16.8px;color:#90caf9;font-weight:700;transform:scaleX(0.9849);">Z Axis</span>
<div style="left:1566.6px;top:491px;width:42px;height:38px;border:1px solid #d03c32;border-radius:4px"></div>
<div style="left:1580.3px;top:508.8px;width:14.4px;height:2px;background:#f44336"></div>
<div style="left:1613.8px;top:491px;width:42px;height:38px;border:1px solid #5aa35e;border-radius:4px"></div>
<div style="left:1627.1999999999998px;top:508.9px;width:14.4px;height:2px;background:#66bb6a"></div>
<div style="left:1633.3999999999999px;top:502.7px;width:2px;height:14.4px;background:#66bb6a"></div>
<div style="left:1566.6px;top:537px;width:89px;height:34px;border:1px solid #78587e;border-radius:4px"></div>
<svg class="ic" style="left:1575.75px;top:543.05px;width:21.5px;height:21.5px" viewBox="0 0 24 24" fill="#ce93d8"><path d="M10 20v-6h4v6h5v-8h3L12 3 2 12h3v8z"/></svg>
<span class="t" style="left:1606.40px;top:548.00px;font-size:13.4px;color:#ce93d8;transform:scaleX(0.9337);-webkit-text-stroke:0.3px #ce93d8;">HOME</span>
<div style="left:1566.6px;top:575.2px;width:89px;height:34px;border:1px solid #8a3029;border-radius:4px"></div>
<div style="left:1582.6999999999998px;top:586px;width:11px;height:11.2px;background:#f44336"></div>
<span class="t" style="left:1609.00px;top:586.00px;font-size:13.4px;color:#f44336;transform:scaleX(0.9115);-webkit-text-stroke:0.3px #f44336;">STOP</span>
<span class="t" style="left:1566.80px;top:623.00px;font-size:13.6px;color:#fff;transform:scaleX(0.9417);-webkit-text-stroke:0.5px #fff;">Step Size:</span>
<div style="left:1566.6px;top:644px;width:44px;height:26px;border:1px solid #616161;border-radius:13px"></div>
<span class="t" style="left:1576.30px;top:651.00px;font-size:13.2px;color:#fff;transform:scaleX(0.9250);-webkit-text-stroke:0.25px #fff;">1µm</span>
<div style="left:1570.6px;top:674.6px;width:50.8px;height:26px;background:#90caf9;border-radius:13px"></div>
<span class="t" style="left:1580.40px;top:681.00px;font-size:13.2px;color:#1f1a22;transform:scaleX(0.9463);">10µm</span>
<div style="left:1570.6px;top:705.2px;width:58.2px;height:26px;border:1px solid #616161;border-radius:13px"></div>
<span class="t" style="left:1580.70px;top:712.00px;font-size:13.2px;color:#fff;transform:scaleX(0.9427);-webkit-text-stroke:0.25px #fff;">100µm</span>
<div style="left:1570.6px;top:735.8px;width:64.8px;height:26px;border:1px solid #616161;border-radius:13px"></div>
<span class="t" style="left:1580.40px;top:742.00px;font-size:13.2px;color:#fff;transform:scaleX(0.9444);-webkit-text-stroke:0.25px #fff;">1000µm</span>
<div style="left:1570.6px;top:766.4px;width:71.5px;height:26px;border:1px solid #616161;border-radius:13px"></div>
<span class="t" style="left:1580.40px;top:772.00px;font-size:13.2px;color:#fff;transform:scaleX(0.9456);-webkit-text-stroke:0.25px #fff;">10000µm</span>
<div style="left:1566.6px;top:797.4px;width:89px;height:37.4px;border:1px solid #4d4d4d;border-radius:4px"></div>
<span class="t" style="left:1584.10px;top:809.00px;font-size:14.8px;color:#ececec;">10</span>
<svg class="ic" style="left:1597.8999999999999px;top:805.2px;width:22px;height:21.4px" viewBox="0 0 22 22"><rect width="22" height="22" fill="#e6e6ed"/><path d="M7.5 8 11 5l3.5 3M7.5 14l3.5 3 3.5-3" fill="none" stroke="#85859a" stroke-width="1.7" stroke-linecap="round" stroke-linejoin="round"/></svg>
<span class="t" style="left:1620.60px;top:809.00px;font-size:14.8px;color:#e4e4e4;transform:scaleX(0.8738);">µm</span>
<div style="left:1681.4px;top:441px;width:116.6px;height:408px;border:1px solid #3a3a3a;border-radius:4px;box-shadow:0 2px 1px -1px rgba(0,0,0,.2),0 1px 1px rgba(0,0,0,.14),0 1px 3px rgba(0,0,0,.12)"></div>
<span class="t" style="left:1715.30px;top:462.00px;font-size:16.8px;color:#90caf9;font-weight:700;transform:scaleX(0.9608);">A Axis</span>
<div style="left:1695.4px;top:491px;width:42px;height:38px;border:1px solid #d03c32;border-radius:4px"></div>
<div style="left:1709.1000000000001px;top:508.8px;width:14.4px;height:2px;background:#f44336"></div>
<div style="left:1742.6000000000001px;top:491px;width:42px;height:38px;border:1px solid #5aa35e;border-radius:4px"></div>
<div style="left:1756.0px;top:508.9px;width:14.4px;height:2px;background:#66bb6a"></div>
<div style="left:1762.2px;top:502.7px;width:2px;height:14.4px;background:#66bb6a"></div>
<div style="left:1695.4px;top:537px;width:89px;height:34px;border:1px solid #78587e;border-radius:4px"></div>
<svg class="ic" style="left:1704.55px;top:543.05px;width:21.5px;height:21.5px" viewBox="0 0 24 24" fill="#ce93d8"><path d="M10 20v-6h4v6h5v-8h3L12 3 2 12h3v8z"/></svg>
<span class="t" style="left:1735.20px;top:548.00px;font-size:13.4px;color:#ce93d8;transform:scaleX(0.9337);-webkit-text-stroke:0.3px #ce93d8;">HOME</span>
<div style="left:1695.4px;top:575.2px;width:89px;height:34px;border:1px solid #8a3029;border-radius:4px"></div>
<div style="left:1711.5px;top:586px;width:11px;height:11.2px;background:#f44336"></div>
<span class="t" style="left:1737.80px;top:586.00px;font-size:13.4px;color:#f44336;transform:scaleX(0.9115);-webkit-text-stroke:0.3px #f44336;">STOP</span>
<span class="t" style="left:1695.60px;top:623.00px;font-size:13.6px;color:#fff;transform:scaleX(0.9417);-webkit-text-stroke:0.5px #fff;">Step Size:</span>
<div style="left:1695.4px;top:644px;width:44px;height:26px;border:1px solid #616161;border-radius:13px"></div>
<span class="t" style="left:1705.10px;top:651.00px;font-size:13.2px;color:#fff;transform:scaleX(0.9250);-webkit-text-stroke:0.25px #fff;">1µm</span>
<div style="left:1699.4px;top:674.6px;width:50.8px;height:26px;background:#90caf9;border-radius:13px"></div>
<span class="t" style="left:1709.20px;top:681.00px;font-size:13.2px;color:#1f1a22;transform:scaleX(0.9463);">10µm</span>
<div style="left:1699.4px;top:705.2px;width:58.2px;height:26px;border:1px solid #616161;border-radius:13px"></div>
<span class="t" style="left:1709.50px;top:712.00px;font-size:13.2px;color:#fff;transform:scaleX(0.9427);-webkit-text-stroke:0.25px #fff;">100µm</span>
<div style="left:1699.4px;top:735.8px;width:64.8px;height:26px;border:1px solid #616161;border-radius:13px"></div>
<span class="t" style="left:1709.20px;top:742.00px;font-size:13.2px;color:#fff;transform:scaleX(0.9444);-webkit-text-stroke:0.25px #fff;">1000µm</span>
<div style="left:1699.4px;top:766.4px;width:71.5px;height:26px;border:1px solid #616161;border-radius:13px"></div>
<span class="t" style="left:1709.20px;top:772.00px;font-size:13.2px;color:#fff;transform:scaleX(0.9456);-webkit-text-stroke:0.25px #fff;">10000µm</span>
<div style="left:1695.4px;top:797.4px;width:89px;height:37.4px;border:1px solid #4d4d4d;border-radius:4px"></div>
<span class="t" style="left:1712.90px;top:809.00px;font-size:14.8px;color:#ececec;">10</span>
<svg class="ic" style="left:1726.7px;top:805.2px;width:22px;height:21.4px" viewBox="0 0 22 22"><rect width="22" height="22" fill="#e6e6ed"/><path d="M7.5 8 11 5l3.5 3M7.5 14l3.5 3 3.5-3" fill="none" stroke="#85859a" stroke-width="1.7" stroke-linecap="round" stroke-linejoin="round"/></svg>
<span class="t" style="left:1749.40px;top:809.00px;font-size:14.8px;color:#e4e4e4;transform:scaleX(0.8738);">µm</span>
<div style="left:1295px;top:866px;width:503px;height:1px;background:#3a3a3a"></div>
<div style="left:1295px;top:884.4px;width:180px;height:44px;border:1px solid #4d4d4d;border-radius:4px"></div>
<div style="left:1306px;top:884.4px;width:91px;height:1px;background:#1f1f1f"></div>
<span class="t" style="left:1312.00px;top:876.00px;font-size:14.7px;color:#b5b5b5;transform:scaleX(0.9450);">Global Speed</span>
<span class="t" style="left:1317.80px;top:895.00px;font-size:22px;color:#fff;">0</span>
<svg class="ic" style="left:1437.2px;top:894px;width:22px;height:22px" viewBox="0 0 22 22"><rect width="22" height="22" fill="#e9e9f0"/><path d="M7.5 8 11 5l3.5 3M7.5 14l3.5 3 3.5-3" fill="none" stroke="#85859a" stroke-width="1.7" stroke-linecap="round" stroke-linejoin="round"/></svg>
<div style="left:1522px;top:883.7px;width:136px;height:42px;background:#ce93d8;border-radius:4px"></div>
<svg class="ic" style="left:1535.75px;top:894.65px;width:21.5px;height:21.5px" viewBox="0 0 24 24" fill="#231927"><path d="M10 20v-6h4v6h5v-8h3L12 3 2 12h3v8z"/></svg>
<div style="left:1667px;top:883.7px;width:131px;height:42px;background:#f44336;border-radius:4px"></div>
</div>
</section>
</main>
</body>
</html>
